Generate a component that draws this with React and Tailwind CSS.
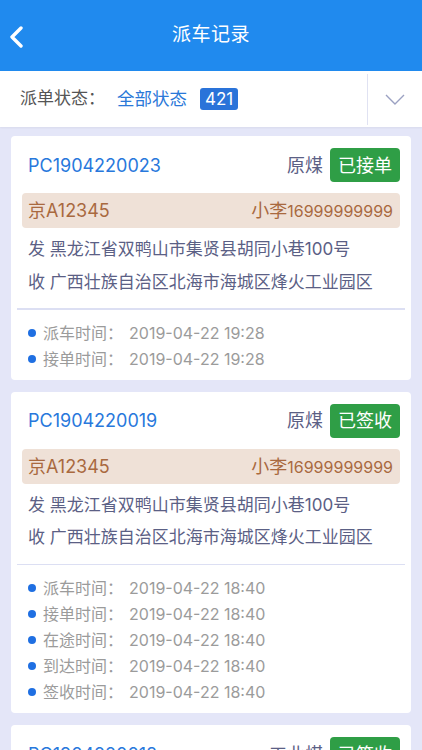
const orders = [
  {
    no: 'PC1904220023',
    goods: '原煤',
    status: '已接单',
    plate: '京A12345',
    driver: '小李',
    phone: '16999999999',
    from: '黑龙江省双鸭山市集贤县胡同小巷100号',
    to: '广西壮族自治区北海市海城区烽火工业园区',
    times: [
      ['派车时间', '2019-04-22 19:28'],
      ['接单时间', '2019-04-22 19:28'],
    ],
  },
  {
    no: 'PC1904220019',
    goods: '原煤',
    status: '已签收',
    plate: '京A12345',
    driver: '小李',
    phone: '16999999999',
    from: '黑龙江省双鸭山市集贤县胡同小巷100号',
    to: '广西壮族自治区北海市海城区烽火工业园区',
    times: [
      ['派车时间', '2019-04-22 18:40'],
      ['接单时间', '2019-04-22 18:40'],
      ['在途时间', '2019-04-22 18:40'],
      ['到达时间', '2019-04-22 18:40'],
      ['签收时间', '2019-04-22 18:40'],
    ],
  },
  {
    no: 'PC1904220018',
    goods: '工业煤',
    status: '已签收',
    plate: '京A12345',
    driver: '小李',
    phone: '16999999999',
    from: '黑龙江省双鸭山市集贤县胡同小巷100号',
    to: '广西壮族自治区北海市海城区烽火工业园区',
    times: [['派车时间', '2019-04-22 18:20']],
  },
];

const OrderCard = ({ order }) => (
  <div className="bg-white rounded-[4px] pt-[12px] px-[11px] pb-[8px]">
    <div className="h-[34px] flex items-center justify-between pl-[6px]">
      <span className="text-[18px] text-[#2878dc]">{order.no}</span>
      <div className="flex items-center gap-[7px]">
        <span className="text-[18px] text-[#5b6085]">{order.goods}</span>
        <span className="h-[34px] px-[8px] flex items-center rounded-[4px] bg-[#2f9e46] text-white text-[18px]">
          {order.status}
        </span>
      </div>
    </div>
    <div className="mt-[11px] h-[35px] rounded-[4px] bg-[#efe1d7] flex items-center justify-between pl-[6px] pr-[7px] text-[#a9693f]">
      <span className="text-[18px]">{order.plate}</span>
      <span className="flex items-baseline">
        <span className="text-[18px]">{order.driver}</span>
        <span className="text-[16px]">{order.phone}</span>
      </span>
    </div>
    <div className="pt-[5px] pl-[6px] text-[17px] text-[#5b6085] leading-[32.5px]">
      <div>发 {order.from}</div>
      <div>收 {order.to}</div>
    </div>
    <div className="mt-[10px] -mx-[5px] h-[1.5px] bg-[#dcdff3]" />
    <div className="pt-[10px] pl-[6px] text-[16px] text-[#9b9b9b] leading-[26px]">
      {order.times.map(([label, value]) => (
        <div key={label} className="flex items-center">
          <span className="w-[8px] h-[8px] rounded-full bg-[#1f6fe2] mr-[7px]" />
          <span>{label}：</span>
          <span className="ml-[6px]">{value}</span>
        </div>
      ))}
    </div>
  </div>
);

export default function App() {
  return (
    <div
      className="w-[422px] h-[750px] overflow-hidden bg-[#e4e6f8]"
      style={{ fontFamily: 'Inter, "Noto Sans CJK SC", "Noto Sans", sans-serif' }}
    >
      <div className="h-[71px] bg-[#208aee] flex items-center relative">
        <svg className="absolute left-[8px] top-[26px]" width="18" height="22" viewBox="0 0 18 22">
          <path d="M13 2 L4 11 L13 20" fill="none" stroke="#fff" strokeWidth="3.4" strokeLinecap="round" strokeLinejoin="round" />
        </svg>
        <div className="flex-1 text-center text-white text-[19px] tracking-[0.5px]">派车记录</div>
      </div>
      <div className="h-[56px] bg-white flex items-center shadow-[0_1px_2px_rgba(0,0,0,0.05)]">
        <div className="flex-1 flex items-center pl-[20px]">
          <span className="text-[17px] text-[#555]">派单状态：</span>
          <span className="ml-[12px] text-[17.5px] text-[#2a78d8]">全部状态</span>
          <span className="ml-[13px] h-[22px] px-[5px] flex items-center rounded-[3px] bg-[#2a73d9] text-white text-[17px] leading-none">
            421
          </span>
        </div>
        <div className="w-[1.5px] h-[51px] bg-[#e0e2f2]" />
        <div className="w-[54px] flex items-center justify-center">
          <svg width="20" height="11" viewBox="0 0 20 11">
            <path d="M1 1 L10 10 L19 1" fill="none" stroke="#9ba1c2" strokeWidth="1.4" />
          </svg>
        </div>
      </div>
      <div className="px-[11px] pt-[9px] flex flex-col gap-[12px]">
        {orders.map((o) => (
          <OrderCard key={o.no} order={o} />
        ))}
      </div>
    </div>
  );
}
